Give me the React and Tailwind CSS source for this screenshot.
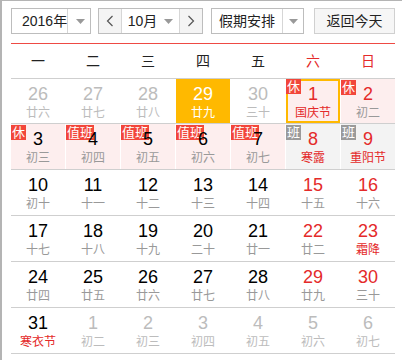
import React from 'react';

const RED = 'text-[#e42a2a]';

const rows = [
  [
    { d: 26, l: '廿六', other: true },
    { d: 27, l: '廿七', other: true },
    { d: 28, l: '廿八', other: true },
    { d: 29, l: '廿九', today: true },
    { d: 30, l: '三十', other: true },
    { d: 1, l: '国庆节', rest: true, fest: true, weekend: true, selected: true, badge: '休' },
    { d: 2, l: '初二', rest: true, weekend: true, badge: '休' },
  ],
  [
    { d: 3, l: '初三', rest: true, badge: '休' },
    { d: 4, l: '初四', rest: true, badge: '值班' },
    { d: 5, l: '初五', rest: true, badge: '值班' },
    { d: 6, l: '初六', rest: true, badge: '值班' },
    { d: 7, l: '初七', rest: true, badge: '值班' },
    { d: 8, l: '寒露', work: true, fest: true, weekend: true, badge: '班' },
    { d: 9, l: '重阳节', work: true, fest: true, weekend: true, badge: '班' },
  ],
  [
    { d: 10, l: '初十' },
    { d: 11, l: '十一' },
    { d: 12, l: '十二' },
    { d: 13, l: '十三' },
    { d: 14, l: '十四' },
    { d: 15, l: '十五', weekend: true },
    { d: 16, l: '十六', weekend: true },
  ],
  [
    { d: 17, l: '十七' },
    { d: 18, l: '十八' },
    { d: 19, l: '十九' },
    { d: 20, l: '二十' },
    { d: 21, l: '廿一' },
    { d: 22, l: '廿二', weekend: true },
    { d: 23, l: '霜降', weekend: true, fest: true },
  ],
  [
    { d: 24, l: '廿四' },
    { d: 25, l: '廿五' },
    { d: 26, l: '廿六' },
    { d: 27, l: '廿七' },
    { d: 28, l: '廿八' },
    { d: 29, l: '廿九', weekend: true },
    { d: 30, l: '三十', weekend: true },
  ],
  [
    { d: 31, l: '寒衣节', fest: true },
    { d: 1, l: '初二', other: true },
    { d: 2, l: '初三', other: true },
    { d: 3, l: '初四', other: true },
    { d: 4, l: '初五', other: true },
    { d: 5, l: '初六', other: true },
    { d: 6, l: '初七', other: true },
  ],
];

const Caret = () => (
  <svg width="9" height="5" viewBox="0 0 9 5">
    <path d="M0 0h9L4.5 5z" fill="#999" />
  </svg>
);

const Chevron = ({ right }) => (
  <svg width="8" height="12" viewBox="0 0 8 12">
    <path d={right ? 'M1.5 1l5 5-5 5' : 'M6.5 1l-5 5 5 5'} stroke="#555" strokeWidth="1.2" fill="none" />
  </svg>
);

const Cell = ({ c }) => {
  let bg = '';
  if (c.today) bg = 'bg-[#ffb900]';
  else if (c.rest) bg = 'bg-[#fdeeee]';
  else if (c.work) bg = 'bg-[#f3f3f3]';

  let numColor = 'text-black';
  if (c.today) numColor = 'text-white';
  else if (c.other) numColor = 'text-[#bcbcbc]';
  else if (c.weekend) numColor = RED;

  let lunarColor = 'text-[#999]';
  if (c.today) lunarColor = 'text-white';
  else if (c.other) lunarColor = 'text-[#bcbcbc]';
  else if (c.fest) lunarColor = RED;

  return (
    <div
      className={`relative flex flex-col items-center ${bg} ${
        c.selected ? 'border-2 border-[#ffb900] pt-[3px]' : 'pt-[5px]'
      }`}
    >
      {c.badge && (
        <span
          className={`absolute px-px text-[13px] leading-[15px] text-white whitespace-nowrap ${
            c.badge === '班' ? 'bg-[#9a9a9a]' : 'bg-[#f2463a]'
          } ${c.selected ? '-left-[2px] -top-[2px]' : 'left-0 top-px'}`}
        >
          {c.badge}
        </span>
      )}
      <span className={`relative text-[18px] leading-[20px] ${numColor}`}>{c.d}</span>
      <span className={`mt-px text-[12px] leading-[16px] whitespace-nowrap ${lunarColor}`}>{c.l}</span>
    </div>
  );
};

export default function App() {
  return (
    <div className="w-[402px] h-[360px] overflow-hidden bg-white border-t border-l-2 border-[#b4b4b4] font-['Liberation_Sans','Noto_Sans_CJK_SC',sans-serif]">
      <div className="w-[384px] ml-[9px] pt-[7px]">
        {/* toolbar */}
        <div className="flex h-[26px] text-[14px] text-[#222] whitespace-nowrap">
          <div className="flex w-[80px] border border-[#bdbdbd] bg-white">
            <div className="flex-1 flex items-center pl-[10px]">2016年</div>
            <div className="w-[25px] shrink-0 border-l border-[#d6d6d6] flex items-center justify-center">
              <Caret />
            </div>
          </div>
          <div className="ml-[7px] flex w-[105px] border border-[#bdbdbd]">
            <div className="w-[22px] bg-[#f4f4f4] flex items-center justify-center">
              <Chevron />
            </div>
            <div className="flex-1 flex items-center justify-center gap-[7px] bg-white border-x border-[#d6d6d6]">
              <span>10月</span>
              <Caret />
            </div>
            <div className="w-[22px] bg-[#f4f4f4] flex items-center justify-center">
              <Chevron right />
            </div>
          </div>
          <div className="ml-[8px] flex w-[93px] border border-[#bdbdbd] bg-white">
            <div className="flex-1 flex items-center justify-center">假期安排</div>
            <div className="w-[21px] shrink-0 border-l border-[#d6d6d6] flex items-center justify-center">
              <Caret />
            </div>
          </div>
          <button className="ml-[10px] w-[81px] border border-[#d0d0d0] bg-[#f6f6f6] text-[14px] text-[#222]">
            返回今天
          </button>
        </div>

        <div className="mt-[9px] h-px bg-[#ee4a44]" />

        {/* weekday header */}
        <div className="grid grid-cols-7 gap-x-px h-[35px] border-b border-[#cfcfcf] text-[14px]">
          {['一', '二', '三', '四', '五', '六', '日'].map((w, i) => (
            <div
              key={w}
              className={`flex items-center justify-center ${i > 4 ? RED : 'text-[#222]'}`}
            >
              {w}
            </div>
          ))}
        </div>

        {rows.map((r, i) => (
          <div
            key={i}
            className={`grid grid-cols-7 gap-x-px border-b border-[#cfcfcf] ${
              i === 0 ? 'h-[45px]' : 'h-[46px]'
            }`}
          >
            {r.map((c, j) => (
              <Cell key={j} c={c} />
            ))}
          </div>
        ))}
      </div>
    </div>
  );
}
